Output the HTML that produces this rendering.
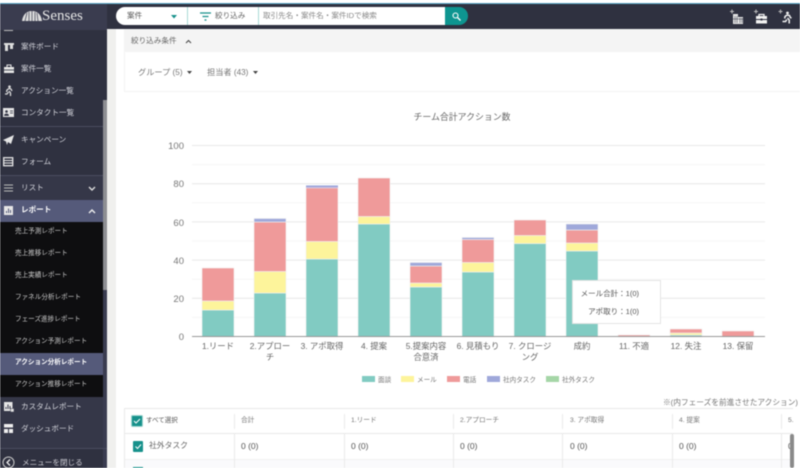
<!DOCTYPE html>
<html lang="ja"><head><meta charset="utf-8"><title>Senses</title>
<style>
*{box-sizing:border-box}
html,body{margin:0;padding:0;width:800px;height:468px;overflow:hidden;background:#fff}
body{font-family:"Liberation Sans","Noto Sans CJK JP",sans-serif;position:relative}
#root{position:absolute;left:0;top:0;width:800px;height:468px;overflow:hidden;filter:blur(.42px);background:#fff}
.a{position:absolute;white-space:nowrap}
.side{color:#d4d5dc;font-size:7.6px;line-height:12px;left:21px}
.sub{color:#c9c9c9;font-size:6.6px;line-height:10px;left:15px}
.ic{position:absolute}
.th{color:#777;font-size:6.7px;line-height:10px;top:416px}
.td{color:#555;font-size:8.5px;line-height:12px;top:440px}
.vl{position:absolute;width:1px;background:#ebebeb}
</style></head><body><div id="root">

<div class="a" style="left:107px;top:29px;width:9px;height:439px;background:#f0f0ee"></div>
<div class="a" style="left:124px;top:29px;width:676px;height:23px;background:#f4f4f4"></div>
<div class="a" style="left:124px;top:52px;width:676px;height:40px;border:1px solid #f3f3f3;border-top:0;border-right:0"></div>
<div class="a" style="left:131px;top:35px;font-size:7.6px;line-height:11px;color:#666">絞り込み条件</div>
<svg class="ic" style="left:185px;top:39px" width="7" height="5"><path d="M1 4L3.500 1.500 6 4" fill="none" stroke="#444" stroke-width="1"/></svg>
<div class="a" style="left:138px;top:67px;font-size:8.2px;line-height:12px;color:#777">グループ (5)</div>
<div class="a" style="left:207px;top:67px;font-size:8.2px;line-height:12px;color:#777">担当者 (43)</div>
<svg class="ic" style="left:187px;top:71px" width="5" height="4"><path d="M0 0h5L2.500 3z" fill="#444"/></svg>
<svg class="ic" style="left:253px;top:71px" width="5" height="4"><path d="M0 0h5L2.500 3z" fill="#444"/></svg>

<svg class="a" style="left:0;top:0" width="800" height="468" font-family="'Liberation Sans','Noto Sans CJK JP',sans-serif">
<text x="462" y="120" font-size="8.9" fill="#666" text-anchor="middle">チーム合計アクション数</text>
<g stroke="#f6f6f6" stroke-width="1"><path d="M192 164.600H765M192 202.800H765M192 241H765M192 279.200H765M192 317.400H765"/></g>
<g stroke="#e8e8e8" stroke-width="1"><path d="M192 145.500H765M192 183.700H765M192 221.900H765M192 260.100H765M192 298.300H765"/></g>
<g font-size="9.5" fill="#777" text-anchor="end"><text x="184" y="149">100</text><text x="184" y="187">80</text><text x="184" y="226">60</text><text x="184" y="264">40</text><text x="184" y="302">20</text><text x="184" y="340">0</text></g>
<g stroke="#f2f2f2" stroke-width=".6">
<rect x="202" y="310" width="32" height="27" fill="#81cbc2"/><rect x="202" y="301" width="32" height="9" fill="#fdf49b"/><rect x="202" y="268" width="32" height="33" fill="#ef9a9a"/>
<rect x="254" y="293" width="32" height="44" fill="#81cbc2"/><rect x="254" y="271.500" width="32" height="21.500" fill="#fdf49b"/><rect x="254" y="222" width="32" height="49.500" fill="#ef9a9a"/><rect x="254" y="218.500" width="32" height="3.500" fill="#9fa8da"/>
<rect x="306" y="259" width="32" height="78" fill="#81cbc2"/><rect x="306" y="241.500" width="32" height="17.500" fill="#fdf49b"/><rect x="306" y="188" width="32" height="53.500" fill="#ef9a9a"/><rect x="306" y="186.500" width="32" height="1.500" fill="#c3b8e0" stroke="none"/><rect x="306" y="185.500" width="32" height="1.200" fill="#8f9fd8" stroke="none"/>
<rect x="358" y="224" width="32" height="113" fill="#81cbc2"/><rect x="358" y="216.500" width="32" height="7.500" fill="#fdf49b"/><rect x="358" y="178" width="32" height="38.500" fill="#ef9a9a"/>
<rect x="410" y="287" width="32" height="50" fill="#81cbc2"/><rect x="410" y="283" width="32" height="4" fill="#fdf49b"/><rect x="410" y="266" width="32" height="17" fill="#ef9a9a"/><rect x="410" y="262.500" width="32" height="3.500" fill="#9fa8da"/>
<rect x="462" y="272" width="32" height="65" fill="#81cbc2"/><rect x="462" y="262.500" width="32" height="9.500" fill="#fdf49b"/><rect x="462" y="239.500" width="32" height="23" fill="#ef9a9a"/><rect x="462" y="237.500" width="32" height="2" fill="#9fa8da"/>
<rect x="514" y="243.500" width="32" height="93.500" fill="#81cbc2"/><rect x="514" y="235.500" width="32" height="8" fill="#fdf49b"/><rect x="514" y="220" width="32" height="15.500" fill="#ef9a9a"/>
<rect x="566" y="251" width="32" height="86" fill="#81cbc2"/><rect x="566" y="243" width="32" height="8" fill="#fdf49b"/><rect x="566" y="230" width="32" height="13" fill="#ef9a9a"/><rect x="566" y="224" width="32" height="6" fill="#9fa8da"/>
<rect x="618" y="335" width="32" height="2" fill="#ef9a9a"/>
<rect x="670" y="335" width="32" height="2" fill="#81cbc2"/><rect x="670" y="333" width="32" height="2" fill="#fdf49b"/><rect x="670" y="329" width="32" height="4" fill="#ef9a9a"/>
<rect x="722" y="331" width="32" height="6" fill="#ef9a9a"/>
</g>
<path d="M192 336.500H765" stroke="#999" stroke-width="1"/>
<g font-size="8.4" fill="#666" text-anchor="middle">
<text x="218" y="349">1.リード</text>
<text x="270" y="349">2.アプロー</text><text x="270" y="360">チ</text>
<text x="322" y="349">3. アポ取得</text>
<text x="374" y="349">4. 提案</text>
<text x="426" y="349">5.提案内容</text><text x="426" y="360">合意済</text>
<text x="478" y="349">6. 見積もり</text>
<text x="530" y="349">7. クロージ</text><text x="530" y="360">ング</text>
<text x="582" y="349">成約</text>
<text x="634" y="349">11. 不適</text>
<text x="686" y="349">12. 失注</text>
<text x="738" y="349">13. 保留</text>
</g>
<g font-size="6.6" fill="#777">
<rect x="362" y="376" width="13" height="6" fill="#81cbc2"/><text x="378" y="382">面談</text>
<rect x="401" y="376" width="13" height="6" fill="#fdf49b"/><text x="417" y="382">メール</text>
<rect x="447" y="376" width="13" height="6" fill="#ef9a9a"/><text x="463" y="382">電話</text>
<rect x="487" y="376" width="13" height="6" fill="#9fa8da"/><text x="503" y="382">社内タスク</text>
<rect x="546" y="376" width="13" height="6" fill="#a5d6a7"/><text x="562" y="382">社外タスク</text>
</g>
<text x="798" y="405" font-size="7.7" fill="#777" text-anchor="end">※(内フェーズを前進させたアクション)</text>
<rect x="572.500" y="280.500" width="88" height="43" fill="#fff" stroke="#e4e4e4"/>
<g font-size="7.5" fill="#555" text-anchor="end"><text x="639" y="296">メール合計：1(0)</text><text x="639" y="314">アポ取り：1(0)</text></g>
</svg>

<div class="a" style="left:124px;top:408px;width:669px;height:1px;background:#e8e8e8"></div>
<div class="a" style="left:124px;top:433px;width:669px;height:1px;background:#e8e8e8"></div>
<div class="a" style="left:124px;top:459px;width:669px;height:9px;background:#fafafc;border-top:1px solid #f0f0f0"></div>
<div class="vl" style="left:124px;top:408px;height:60px"></div>
<div class="vl" style="left:234px;top:414px;height:15px"></div><div class="vl" style="left:344px;top:414px;height:15px"></div><div class="vl" style="left:453px;top:414px;height:15px"></div><div class="vl" style="left:562px;top:414px;height:15px"></div><div class="vl" style="left:672px;top:414px;height:15px"></div><div class="vl" style="left:781px;top:414px;height:15px"></div>
<div class="vl" style="left:234px;top:434px;height:34px"></div><div class="vl" style="left:344px;top:434px;height:34px"></div><div class="vl" style="left:453px;top:434px;height:34px"></div><div class="vl" style="left:562px;top:434px;height:34px"></div><div class="vl" style="left:672px;top:434px;height:34px"></div><div class="vl" style="left:781px;top:434px;height:34px"></div>
<svg class="ic" style="left:131px;top:415px" width="12" height="12"><rect x=".5" y=".5" width="11" height="11" rx="1" fill="#17918b" stroke="#9fd5d0"/><path d="M3 6l2 2 4-4" fill="none" stroke="#fff" stroke-width="1"/></svg>
<svg class="ic" style="left:133px;top:441px" width="10" height="11"><rect width="10" height="11" rx="1" fill="#17918b"/><path d="M2.500 5.500l2 2 3.500-4" fill="none" stroke="#fff" stroke-width="1"/></svg>
<div class="a" style="left:133px;top:467px;width:10px;height:4px;background:#17918b"></div>
<div class="a" style="left:146px;top:416px;font-size:6.5px;line-height:10px;color:#555">すべて選択</div>
<div class="a" style="left:149px;top:440px;font-size:7.8px;line-height:12px;color:#666">社外タスク</div>
<div class="a th" style="left:241px">合計</div><div class="a th" style="left:351px">1.リード</div><div class="a th" style="left:460px">2.アプローチ</div><div class="a th" style="left:570px">3. アポ取得</div><div class="a th" style="left:679px">4. 提案</div><div class="a th" style="left:788px">5.</div>
<div class="a td" style="left:241px">0 (0)</div><div class="a td" style="left:351px">0 (0)</div><div class="a td" style="left:460px">0 (0)</div><div class="a td" style="left:570px">0 (0)</div><div class="a td" style="left:679px">0 (0)</div><div class="a td" style="left:788px">0</div>
<div class="a" style="left:790px;top:434px;width:4px;height:34px;background:#8a8a8a;border-radius:2px"></div>

<!-- top bar -->
<div class="a" style="left:0;top:3px;width:800px;height:26px;background:#2f3140"></div>
<div class="a" style="left:0;top:3px;width:107px;height:26px;background:#3a3c4f"></div>
<div class="a" style="left:0;top:2.500px;width:800px;height:1.500px;background:#56a6c6"></div>
<svg class="ic" style="left:21px;top:10px" width="22" height="12"><path d="M1 11C2 4 6 1 11 1s9 3 10 10z" fill="#ddd"/><path d="M4 11L6 3M8 11V2M11 11V1M14 11V2M17 11L16 3" stroke="#3a3c4f" stroke-width=".7"/></svg>
<div class="a" style="left:42px;top:7.500px;font-family:'Liberation Serif',serif;font-size:15px;line-height:17px;color:#e6e6e6">Senses</div>
<div class="a" style="left:116px;top:7px;width:330px;height:18px;background:#fff;border-radius:9px 0 0 9px"></div>
<div class="a" style="left:187px;top:7px;width:1px;height:18px;background:#a9dad6"></div>
<div class="a" style="left:258px;top:7px;width:1px;height:18px;background:#a9dad6"></div>
<div class="a" style="left:127px;top:10px;font-size:7.6px;line-height:11px;color:#555">案件</div>
<svg class="ic" style="left:171px;top:15px" width="6" height="4"><path d="M0 0h6L3 3.500z" fill="#17918b"/></svg>
<svg class="ic" style="left:200px;top:12px" width="11" height="9"><path d="M0 1h11M2.500 4.500h6M4.500 8h2" stroke="#17918b" stroke-width="1.300"/></svg>
<div class="a" style="left:215px;top:10px;font-size:7.6px;line-height:11px;color:#666">絞り込み</div>
<div class="a" style="left:263px;top:10px;font-size:7.6px;line-height:11px;color:#888">取引先名・案件名・案件IDで検索</div>
<div class="a" style="left:445px;top:7px;width:23px;height:18px;background:#0e9590;border-radius:0 9px 9px 0"></div>
<svg class="ic" style="left:452px;top:12px" width="9" height="9"><circle cx="3.500" cy="3.500" r="2.500" fill="none" stroke="#fff" stroke-width="1.100"/><path d="M5.500 5.500L8.500 8.500" stroke="#fff" stroke-width="1.300"/></svg>

<svg class="ic" style="left:728px;top:7px" width="18" height="18" fill="#e6e6e6"><path d="M4 2.500v4M2 4.500h4" stroke="#bbb"/><path d="M5 7h5v10H5zM10 10h5v7h-5z"/><path d="M7 9v7M9 9v7M12 11v5M14 11v5M5 12h10" stroke="#2f3140" stroke-width=".5"/></svg>
<svg class="ic" style="left:753px;top:7px" width="18" height="18"><path d="M3 2.500v4M1 4.500h4" stroke="#bbb"/><path d="M3 9h11v7.500H3z" fill="#f2f2f2"/><path d="M6 9V7.500h5V9" fill="none" stroke="#f2f2f2" stroke-width="1.300"/><path d="M3 12.500h11" stroke="#2f3140"/><rect x="7.500" y="11.500" width="2" height="2" fill="#2f3140"/></svg>
<svg class="ic" style="left:778px;top:7px" width="18" height="18"><path d="M2.500 2.500v4M.5 4.500h4" stroke="#bbb"/><circle cx="9.500" cy="6" r="1.400" fill="#f2f2f2"/><path d="M9 8l2.500.5.800 2 1.200.6M9 8L7 9.500 6.700 11.500M9.500 11l1.700 2v3.500M8.800 12.500l-1.200 2H4.500" fill="none" stroke="#f2f2f2" stroke-width="1.500"/></svg>

<!-- sidebar -->
<div class="a" style="left:0;top:29px;width:107px;height:439px;background:#2f3140"></div>
<div class="a" style="left:103px;top:100px;width:4px;height:190px;background:#8d8e92"></div>
<div class="a" style="left:103px;top:290px;width:4px;height:178px;background:#3a3c50"></div>
<div class="a" style="left:0;top:29px;width:107px;height:1px;background:#3c3e50"></div>
<div class="a" style="left:4px;top:30px;width:9px;height:1px;background:#bbb"></div>

<svg class="ic" style="left:4px;top:42px" width="10" height="10"><path d="M0 1h10v2H0z" fill="#ddd"/><path d="M1 3h3v6H1zM6 3h3v4H6z" fill="#ddd"/></svg>
<div class="a side" style="top:41px">案件ボード</div>
<svg class="ic" style="left:4px;top:64px" width="10" height="10"><path d="M0 3h10v6H0z" fill="#e6e6e6"/><path d="M3 3V1h4v2" fill="none" stroke="#e6e6e6"/><path d="M0 6h10" stroke="#2f3140" stroke-width=".8"/></svg>
<div class="a side" style="top:63px">案件一覧</div>
<svg class="ic" style="left:3px;top:85px" width="11" height="11"><circle cx="6.500" cy="1.700" r="1.300" fill="#ddd"/><path d="M6 3.500l2 .5 1 2M6 3.500L4 5l-.5 2M6 6l1.500 2v3M5.500 7L4 9H2" fill="none" stroke="#ddd" stroke-width="1.300"/></svg>
<div class="a side" style="top:85px">アクション一覧</div>
<svg class="ic" style="left:3px;top:108px" width="11" height="10"><rect width="11" height="9" fill="#e6e6e6"/><circle cx="3.500" cy="3.500" r="1.300" fill="#2f3140"/><path d="M1.500 7.500c0-2 4-2 4 0zM7 3h3M7 5h3" fill="#2f3140" stroke="#2f3140" stroke-width=".7"/></svg>
<div class="a side" style="top:107px">コンタクト一覧</div>
<div class="a" style="left:0;top:126px;width:103px;height:1px;background:#4a4c5f"></div>
<svg class="ic" style="left:3px;top:135px" width="11" height="10"><path d="M0 5L11 0 8 9 5 7 4 10 3 6.500z" fill="#e6e6e6"/></svg>
<div class="a side" style="top:134px">キャンペーン</div>
<svg class="ic" style="left:3px;top:157px" width="11" height="10"><rect x=".7" y=".7" width="9" height="8" fill="none" stroke="#e6e6e6" stroke-width="1.300"/><path d="M1 3.500h9M1 6h9" stroke="#e6e6e6"/></svg>
<div class="a side" style="top:156px">フォーム</div>
<div class="a" style="left:0;top:175px;width:103px;height:1px;background:#4a4c5f"></div>
<div class="a" style="left:0;top:176px;width:103px;height:24px;background:#353748"></div>
<svg class="ic" style="left:4px;top:184px" width="9" height="9"><path d="M0 1h9M0 4h9M0 7h9" stroke="#bbb"/></svg>
<div class="a side" style="top:182px">リスト</div>
<svg class="ic" style="left:88px;top:186px" width="8" height="6"><path d="M1 1l3 3 3-3" fill="none" stroke="#ddd" stroke-width="1.400"/></svg>
<div class="a" style="left:0;top:200px;width:103px;height:22px;background:#555a7a"></div>
<svg class="ic" style="left:4px;top:206px" width="9" height="9"><rect width="9" height="9" fill="#e6e6e6"/><path d="M2.500 7V5M4.500 7V2.500M6.500 7V4" stroke="#555a7a"/></svg>
<div class="a side" style="top:204px;color:#fff;font-weight:bold">レポート</div>
<svg class="ic" style="left:88px;top:208px" width="8" height="6"><path d="M1 5l3-3 3 3" fill="none" stroke="#eee" stroke-width="1.400"/></svg>
<div class="a" style="left:0;top:222px;width:103px;height:175px;background:#0e0e10"></div>
<div class="a" style="left:0;top:353px;width:103px;height:22px;background:#555a7a"></div>
<div class="a sub" style="top:227px">売上予測レポート</div>
<div class="a sub" style="top:249px">売上推移レポート</div>
<div class="a sub" style="top:271px">売上実績レポート</div>
<div class="a sub" style="top:293px">ファネル分析レポート</div>
<div class="a sub" style="top:315px">フェーズ進捗レポート</div>
<div class="a sub" style="top:337px">アクション予測レポート</div>
<div class="a sub" style="top:358px;color:#fff;font-weight:bold">アクション分析レポート</div>
<div class="a sub" style="top:380px">アクション推移レポート</div>
<div class="a" style="left:0;top:397px;width:103px;height:51px;background:#353748"></div>
<svg class="ic" style="left:4px;top:402px" width="10" height="10"><rect width="8.500" height="9" fill="#e6e6e6"/><path d="M2 7V5M4 7V2.500M6 7V4" stroke="#353748"/><rect x="6.500" y="6.500" width="3.500" height="3.500" fill="#e6e6e6" stroke="#353748" stroke-width=".5"/></svg>
<div class="a side" style="top:401px">カスタムレポート</div>
<svg class="ic" style="left:4px;top:424px" width="9" height="9"><path d="M0 0h9v3.500H0zM0 5h4v4H0zM5 5h4v4H5z" fill="#eee"/></svg>
<div class="a side" style="top:423px">ダッシュボード</div>
<div class="a" style="left:0;top:448px;width:107px;height:1px;background:#4a4c5f"></div>
<svg class="ic" style="left:2px;top:456px" width="13" height="12"><circle cx="6.500" cy="6.500" r="5.500" fill="none" stroke="#ccc"/><path d="M8 3.500L5 6.500l3 3" fill="none" stroke="#eee" stroke-width="1.300"/></svg>
<div class="a side" style="left:22px;top:457px;color:#cfcfd6">メニューを閉じる</div>
</div></body></html>
